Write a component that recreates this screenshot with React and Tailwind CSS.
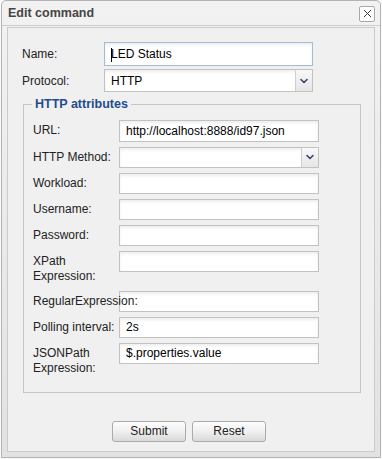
import { ChevronDown, X } from "lucide-react";

const font = { fontFamily: '"Liberation Sans", Arial, sans-serif' };

const Field = ({ value = "", select = false, focused = false, caret = false, className = "" }) => (
  <div
    className={`relative flex items-center h-full bg-white border ${
      focused ? "border-[#a3bbd3]" : "border-[#c2c2c2]"
    } shadow-[inset_0_2px_3px_rgba(0,0,0,0.07)] text-[12px] text-black ${className}`}
  >
    <span className="pl-[6px] whitespace-nowrap">
      {caret && <span className="inline-block w-px h-[14px] bg-black align-middle -mr-px" />}
      {value}
    </span>
    {select && (
      <div className="ml-auto h-full w-[17px] border-l border-[#cfcfcf] bg-gradient-to-b from-[#f8f8f8] to-[#e6e6e6] flex items-center justify-center">
        <ChevronDown size={12} strokeWidth={3.2} className="text-[#34486b]" />
      </div>
    )}
  </div>
);

const Row = ({ label, h = 22, mb = 4, children, lines }) => (
  <div className="flex items-start" style={{ marginBottom: mb }}>
    <div className="w-[86px] shrink-0 relative z-10 text-[12px] leading-[15px] text-[#222] pt-[3px] whitespace-nowrap">
      {lines ? lines.map((l) => <div key={l}>{l}</div>) : label}
    </div>
    <div className="w-[200px]" style={{ height: h }}>
      {children}
    </div>
  </div>
);

export default function App() {
  return (
    <div style={font} className="w-[382px] h-[459px] bg-[#fafafa]">
      <div className="w-[380px] h-[458px] ml-[1px] border border-[#b3b3b3] rounded-t-[5px] bg-gradient-to-b from-[#f2f2f2] to-[#e2e2e2] flex flex-col">
        <div className="h-[25px] flex items-center justify-between pl-[6px] pr-[5px] border-b border-[#cdcdcd]">
          <span className="font-bold text-[12.5px] text-[#454545]">Edit command</span>
          <div className="w-[16px] h-[16px] mt-[1px] bg-white border border-[#a9a9a9] rounded-[2px] flex items-center justify-center">
            <X size={13} strokeWidth={1.8} className="text-[#333]" />
          </div>
        </div>

        <div className="mx-[5px] mt-[1px] h-[425px] bg-[#f0f0f0] border border-[#cbcbcb] px-[14px] pt-[14px]">
          <div className="flex items-center h-[24px] mb-[3px]">
            <div className="w-[82px] text-[12px] text-[#222]">Name:</div>
            <div className="w-[209px] h-full">
              <Field value="LED Status" focused caret />
            </div>
          </div>
          <div className="flex items-center h-[23px]">
            <div className="w-[82px] text-[12px] text-[#222]">Protocol:</div>
            <div className="w-[209px] h-full">
              <Field value="HTTP" select />
            </div>
          </div>

          <fieldset className="mt-[3px] ml-[1px] w-[338px] border border-[#c6c6c6] pl-[9px] pt-[6px] pb-[16px]">
            <legend className="-ml-[1px] px-[3px] font-bold text-[12.5px] text-[#1f4d8c]">HTTP attributes</legend>
            <Row label="URL:" mb={5}>
              <Field value="http://localhost:8888/id97.json" />
            </Row>
            <Row label="HTTP Method:" h={21} mb={5}>
              <Field select />
            </Row>
            <Row label="Workload:" h={21} mb={5}>
              <Field />
            </Row>
            <Row label="Username:" h={21} mb={5}>
              <Field />
            </Row>
            <Row label="Password:" h={21} mb={5}>
              <Field />
            </Row>
            <Row lines={["XPath", "Expression:"]} h={21} mb={7}>
              <Field />
            </Row>
            <Row label="RegularExpression:" h={21} mb={5}>
              <Field />
            </Row>
            <Row label="Polling interval:" h={21} mb={5}>
              <Field value="2s" />
            </Row>
            <Row lines={["JSONPath", "Expression:"]} h={21} mb={0}>
              <Field value="$.properties.value" />
            </Row>
          </fieldset>

          <div className="flex justify-center gap-[6px] mt-[28px] pr-[4px]">
            {["Submit", "Reset"].map((b) => (
              <button
                key={b}
                className="w-[74px] h-[21px] rounded-[3px] border border-[#ababab] bg-gradient-to-b from-[#fdfdfd] via-[#f0f0f0] to-[#d9d9d9] text-[12px] text-[#222]"
              >
                {b}
              </button>
            ))}
          </div>
        </div>
      </div>
    </div>
  );
}
